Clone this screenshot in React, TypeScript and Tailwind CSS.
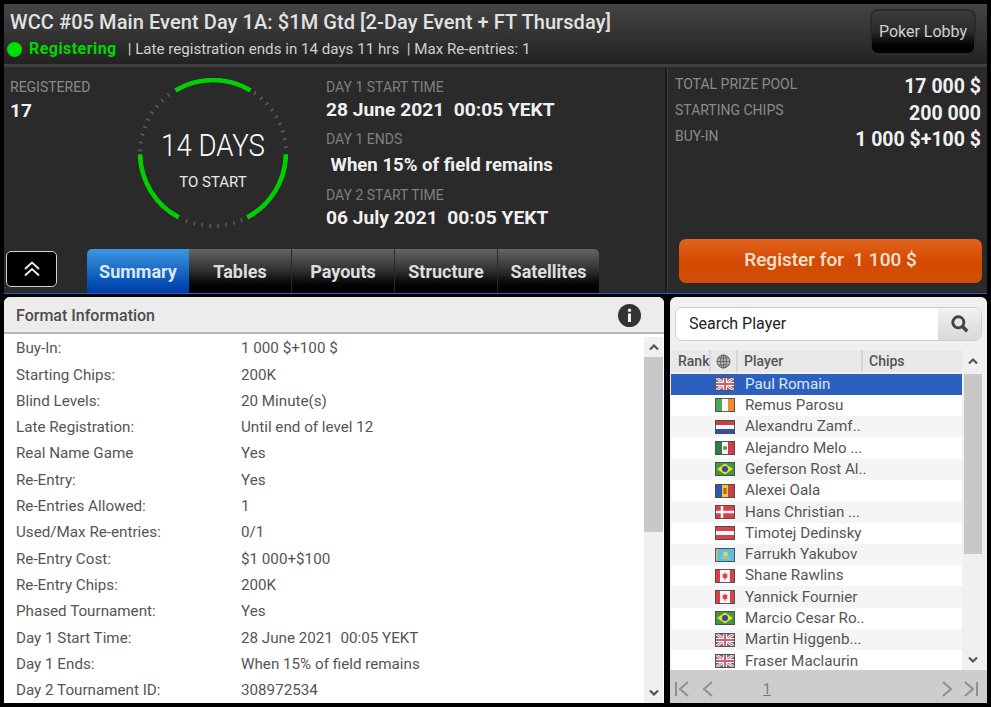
import React from "react";

const FONT = { fontFamily: "Roboto, 'Liberation Sans', sans-serif" };

function polar(r: number, deg: number) {
  const a = ((deg - 90) * Math.PI) / 180;
  return [73 + r * Math.cos(a), 73 + r * Math.sin(a)];
}
function arc(from: number, to: number) {
  const [x1, y1] = polar(71, from);
  const [x2, y2] = polar(71, to);
  return `M${x1} ${y1}A71 71 0 0 1 ${x2} ${y2}`;
}

function Ring() {
  const ticks: number[] = [];
  for (let d = 35; d < 90; d += 6.3) ticks.push(d);
  for (let d = 157; d < 205; d += 6.3) ticks.push(d);
  for (let d = 272; d < 328; d += 6.3) ticks.push(d);
  return (
    <svg width="150" height="150" viewBox="0 0 146 146" className="block">
      {ticks.map((d) => {
        const [a, b] = polar(73, d);
        const [c, e] = polar(69, d);
        return <line key={d} x1={a} y1={b} x2={c} y2={e} stroke="#5c5c5c" strokeWidth="1.5" />;
      })}
      <path d={arc(-31, 31)} stroke="#00d000" strokeWidth="4.5" fill="none" />
      <path d={arc(91, 152)} stroke="#00d000" strokeWidth="4.5" fill="none" />
      <path d={arc(208, 269)} stroke="#00d000" strokeWidth="4.5" fill="none" />
    </svg>
  );
}

type FlagKind = "uk" | "ie" | "nl" | "mx" | "br" | "md" | "dk" | "at" | "kz" | "ca";

function Flag({ kind }: { kind: FlagKind }) {
  let body: React.ReactNode = null;
  if (kind === "uk")
    body = (
      <>
        <rect width="20" height="14" fill="#6a6f9c" />
        <path d="M0 0L20 14M20 0L0 14" stroke="#ececec" strokeWidth="3" />
        <path d="M0 0L20 14M20 0L0 14" stroke="#d0707a" strokeWidth="1" />
        <path d="M10 0V14M0 7H20" stroke="#f4f4f4" strokeWidth="4" />
        <path d="M10 0V14M0 7H20" stroke="#d0606a" strokeWidth="2" />
      </>
    );
  if (kind === "ie")
    body = (
      <>
        <rect width="7" height="14" fill="#4ea65c" />
        <rect x="7" width="6" height="14" fill="#f7f7f7" />
        <rect x="13" width="7" height="14" fill="#f08a32" />
      </>
    );
  if (kind === "nl")
    body = (
      <>
        <rect width="20" height="5" fill="#c8404a" />
        <rect y="5" width="20" height="4" fill="#f7f7f7" />
        <rect y="9" width="20" height="5" fill="#33509c" />
      </>
    );
  if (kind === "mx")
    body = (
      <>
        <rect width="7" height="14" fill="#2f7d4b" />
        <rect x="7" width="6" height="14" fill="#f4f4f4" />
        <rect x="13" width="7" height="14" fill="#cc3f4a" />
        <circle cx="10" cy="7" r="2" fill="#8a7a50" />
      </>
    );
  if (kind === "br")
    body = (
      <>
        <rect width="20" height="14" fill="#3c9a3c" />
        <path d="M10 1.5L18 7L10 12.5L2 7Z" fill="#ecd83a" />
        <circle cx="10" cy="7" r="3" fill="#2d4f96" />
      </>
    );
  if (kind === "md")
    body = (
      <>
        <rect width="7" height="14" fill="#3355a5" />
        <rect x="7" width="6" height="14" fill="#f0c93a" />
        <rect x="13" width="7" height="14" fill="#cc3f4a" />
        <rect x="8.5" y="4" width="3" height="6" fill="#a5662f" />
      </>
    );
  if (kind === "dk")
    body = (
      <>
        <rect width="20" height="14" fill="#d8404a" />
        <path d="M7 0V14M0 7H20" stroke="#f6f6f6" strokeWidth="2.5" />
      </>
    );
  if (kind === "at")
    body = (
      <>
        <rect width="20" height="14" fill="#d8404a" />
        <rect y="5" width="20" height="4" fill="#f6f6f6" />
      </>
    );
  if (kind === "kz")
    body = (
      <>
        <rect width="20" height="14" fill="#5cbfe0" />
        <circle cx="10.5" cy="6" r="2.5" fill="#e8d24a" />
        <path d="M6.5 10H14.5" stroke="#e8d24a" strokeWidth="1" />
        <rect x="1" width="1.5" height="14" fill="#d8c84e" />
      </>
    );
  if (kind === "ca")
    body = (
      <>
        <rect width="20" height="14" fill="#f6f6f6" />
        <rect width="5" height="14" fill="#d8404a" />
        <rect x="15" width="5" height="14" fill="#d8404a" />
        <path d="M10 3L11 5.2L12.6 4.8L12 7.4L13 8L10.4 9.6V11H9.6V9.6L7 8L8 7.4L7.4 4.8L9 5.2Z" fill="#d8404a" />
      </>
    );
  return (
    <svg width="20" height="14" viewBox="0 0 20 14" className="block shrink-0">
      {body}
      <rect x="0.5" y="0.5" width="19" height="13" fill="none" stroke="#4a4a4a" strokeOpacity="0.9" />
    </svg>
  );
}

const INFO: [string, string][] = [
  ["Buy-In:", "1 000 $+100 $"],
  ["Starting Chips:", "200K"],
  ["Blind Levels:", "20 Minute(s)"],
  ["Late Registration:", "Until end of level 12"],
  ["Real Name Game", "Yes"],
  ["Re-Entry:", "Yes"],
  ["Re-Entries Allowed:", "1"],
  ["Used/Max Re-entries:", "0/1"],
  ["Re-Entry Cost:", "$1 000+$100"],
  ["Re-Entry Chips:", "200K"],
  ["Phased Tournament:", "Yes"],
  ["Day 1 Start Time:", "28 June 2021\u00a0\u00a000:05 YEKT"],
  ["Day 1 Ends:", "When 15% of field remains"],
  ["Day 2 Tournament ID:", "308972534"],
];

const PLAYERS: [FlagKind, string][] = [
  ["uk", "Paul Romain"],
  ["ie", "Remus Parosu"],
  ["nl", "Alexandru Zamf.."],
  ["mx", "Alejandro Melo ..."],
  ["br", "Geferson Rost Al.."],
  ["md", "Alexei Oala"],
  ["dk", "Hans Christian ..."],
  ["at", "Timotej Dedinsky"],
  ["kz", "Farrukh Yakubov"],
  ["ca", "Shane Rawlins"],
  ["ca", "Yannick Fournier"],
  ["br", "Marcio Cesar Ro.."],
  ["uk", "Martin Higgenb..."],
  ["uk", "Fraser Maclaurin"],
];

const TABS = ["Summary", "Tables", "Payouts", "Structure", "Satellites"];

function Chevron({ up }: { up?: boolean }) {
  return (
    <svg width="12" height="8" viewBox="0 0 12 8">
      <path d={up ? "M2 6.5L6 2.5L10 6.5" : "M2 1.5L6 5.5L10 1.5"} stroke="#555" strokeWidth="2.2" fill="none" />
    </svg>
  );
}

function Pager({ d }: { d: string }) {
  return (
    <svg width="16" height="18" viewBox="0 0 16 18">
      <path d={d} stroke="#8f8f8f" strokeWidth="2" fill="none" />
    </svg>
  );
}

export default function App() {
  return (
    <div style={FONT} className="w-[991px] h-[707px] bg-black pl-[4px] pt-[4px] pr-[4px] flex flex-col overflow-hidden">
      {/* title bar */}
      <div className="h-[60px] shrink-0 bg-gradient-to-b from-[#454545] to-[#222222] flex justify-between pr-[11px]">
        <div className="pl-[6px] pt-[6px]">
          <div className="text-[20px] leading-[24px] tracking-[0.08px] font-medium text-[#e2e2e2] whitespace-nowrap">
            WCC #05 Main Event Day 1A: $1M Gtd [2-Day Event + FT Thursday]
          </div>
          <div className="flex items-center mt-[5px] -ml-[3px] h-[20px]">
            <span className="w-[15px] h-[15px] rounded-full bg-[#00dd00]" />
            <span className="ml-[7px] text-[16px] tracking-[0.45px] font-bold text-[#00d800]">Registering</span>
            <span className="ml-[11px] text-[15.15px] text-[#cfcfcf] whitespace-pre">| Late registration ends in 14 days 11 hrs  | Max Re-entries: 1</span>
          </div>
        </div>
        <div className="mt-[5px] w-[106px] h-[46px] rounded-[8px] border-[2px] border-[#2a2a2a] bg-gradient-to-b from-[#3c3c3c] via-[#2a2a2a] to-black flex items-center justify-center text-[16px] text-[#cfcfcf]">
          Poker Lobby
        </div>
      </div>
      <div className="h-[3px] shrink-0 bg-[#3f3f3f]" />

      {/* stats */}
      <div className="h-[226px] shrink-0 bg-[#2a2a2a] flex">
        <div className="w-[663px] shrink-0 flex flex-col border-r-[2px] border-[#1c1c1c]">
          <div className="h-[182px] flex">
            <div className="w-[123px] pl-[6px] pt-[12px]">
              <div className="text-[14px] leading-[16px] text-[#8a8a8a]">REGISTERED</div>
              <div className="mt-[5px] text-[19px] leading-[22px] font-bold text-[#f0f0f0]">17</div>
            </div>
            <div className="w-[199px] relative">
              <div className="pt-[11px] pl-[11px]">
                <Ring />
              </div>
              <div className="absolute left-[11px] top-[61px] w-[150px] text-center">
                <div className="text-[31px] leading-[36px] font-light text-white whitespace-nowrap scale-x-[0.89]">14 DAYS</div>
                <div className="mt-[10px] text-[15px] leading-[16px] text-[#e8e8e8]">TO START</div>
              </div>
            </div>
            <div className="pt-[12px]">
              <div className="text-[14px] leading-[16px] text-[#7f7f7f]">DAY 1 START TIME</div>
              <div className="mt-[3px] text-[19.2px] leading-[24px] font-bold text-[#f0f0f0] whitespace-pre">28 June 2021  00:05 YEKT</div>
              <div className="mt-[9px] text-[14px] leading-[16px] text-[#7f7f7f]">DAY 1 ENDS</div>
              <div className="mt-[6px] text-[18.6px] leading-[24px] font-bold text-[#f0f0f0] whitespace-pre"> When 15% of field remains</div>
              <div className="mt-[10px] text-[14px] leading-[16px] text-[#7f7f7f]">DAY 2 START TIME</div>
              <div className="mt-[3px] text-[19.2px] leading-[24px] font-bold text-[#f0f0f0] whitespace-pre">06 July 2021  00:05 YEKT</div>
            </div>
          </div>
          <div className="h-[44px] flex items-end">
            <div className="w-[51px] h-[36px] ml-[2px] mb-[6px] rounded-[5px] border border-[#d0d0d0] bg-black flex items-center justify-center">
              <svg width="20" height="20" viewBox="0 0 20 20">
                <path d="M3 10L10 3.5L17 10M3 16.5L10 10L17 16.5" stroke="#e8e8e8" strokeWidth="2" fill="none" />
              </svg>
            </div>
            <div className="flex ml-[30px]">
              {TABS.map((t, i) => (
                <div
                  key={t}
                  className={
                    i === 0
                      ? "w-[102px] h-[44px] rounded-tl-[5px] bg-gradient-to-b from-[#3b97de] to-[#0039a8] flex items-center justify-center text-[18px] font-bold text-[#dbe8f5]"
                      : i === 4
                      ? "w-[101px] h-[44px] rounded-tr-[5px] bg-gradient-to-b from-[#666666] via-[#2f2f2f] to-black flex items-center justify-center text-[18px] font-bold text-[#dedede]"
                      : "w-[102px] h-[44px] mr-px bg-gradient-to-b from-[#666666] via-[#2f2f2f] to-black flex items-center justify-center text-[18px] font-bold text-[#dedede]"
                  }
                >
                  {t}
                </div>
              ))}
            </div>
          </div>
        </div>
        <div className="flex-1 border-l border-[#3c3c3c] flex flex-col pl-[7px] pr-[6px] pt-[7px]">
          <div className="h-[26px] flex justify-between items-start">
            <span className="text-[14px] leading-[20px] text-[#8a8a8a]">TOTAL PRIZE POOL</span>
            <span className="text-[19.5px] leading-[26px] font-bold text-[#f0f0f0]">17 000 $</span>
          </div>
          <div className="h-[26px] flex justify-between items-start">
            <span className="text-[14px] leading-[20px] text-[#8a8a8a]">STARTING CHIPS</span>
            <span className="pt-px text-[19.5px] leading-[26px] font-bold text-[#f0f0f0]">200 000</span>
          </div>
          <div className="h-[26px] flex justify-between items-start">
            <span className="text-[14px] leading-[20px] text-[#8a8a8a]">BUY-IN</span>
            <span className="pt-px text-[19.5px] leading-[26px] font-bold text-[#f0f0f0]">1 000 $+100 $</span>
          </div>
          <div className="mt-[87px] ml-[4px] -mr-px h-[44px] rounded-[7px] bg-gradient-to-b from-[#e2641c] via-[#d44a00] to-[#cf4f08] flex items-center justify-center pb-[2px] text-[19px] font-medium text-[#f6e3d6] whitespace-pre">
            Register for  1 100 $
          </div>
        </div>
      </div>
      <div className="h-px shrink-0 bg-[#1f66c0]" />

      {/* panels */}
      <div className="flex-1 min-h-0 flex pt-[3px] pb-[4px]">
        {/* format info */}
        <div className="w-[660px] shrink-0 bg-white rounded-t-[6px] flex flex-col overflow-hidden">
          <div className="h-[37px] shrink-0 bg-[#ececec] border-b-[2px] border-[#b5b5b5] flex items-center justify-between pl-[12px] pr-[23px] pt-[2px]">
            <span className="text-[16px] font-medium text-[#4c4c4c]">Format Information</span>
            <svg width="23" height="23" viewBox="0 0 23 23">
              <circle cx="11.5" cy="11.5" r="11.5" fill="#333" />
              <circle cx="11.5" cy="6.2" r="1.7" fill="#eee" />
              <rect x="10" y="9.5" width="3" height="8.5" fill="#eee" />
            </svg>
          </div>
          <div className="flex-1 min-h-0 flex">
            <div className="flex-1 pt-[1.5px] overflow-hidden">
              {INFO.map(([k, v]) => (
                <div key={k} className="h-[26.3px] flex items-center text-[15.2px] text-[#555] whitespace-nowrap">
                  <span className="w-[237px] pl-[12px] shrink-0">{k}</span>
                  <span>{v}</span>
                </div>
              ))}
            </div>
            <div className="w-[19px] shrink-0 mr-px flex flex-col mt-[3px] bg-[#f0f0f0]">
              <div className="h-[20px] flex items-center justify-center"><Chevron up /></div>
              <div className="h-[175px] bg-[#c8c8c8]" />
              <div className="flex-1" />
              <div className="h-[20px] flex items-center justify-center"><Chevron /></div>
            </div>
          </div>
        </div>

        {/* players */}
        <div className="ml-[6px] w-[317px] shrink-0 bg-[#f0f0f0] rounded-t-[6px] flex flex-col overflow-hidden">
          <div className="mx-[5px] mt-[10px] h-[34px] shrink-0 rounded-[7px] border border-[#cfcfcf] bg-white flex overflow-hidden">
            <div className="flex-1 pl-[13px] flex items-center text-[16px] text-[#222]">Search Player</div>
            <div className="w-[43px] bg-gradient-to-b from-[#f2f2f2] to-[#d8d8d8] flex items-center justify-center">
              <svg width="20" height="20" viewBox="0 0 18 18">
                <circle cx="7.5" cy="7.5" r="5" stroke="#444" strokeWidth="2.6" fill="none" />
                <path d="M11 11L15.5 15.5" stroke="#444" strokeWidth="3.2" />
              </svg>
            </div>
          </div>
          <div className="mt-[9px] h-[22px] shrink-0 flex text-[14px] font-medium text-[#555]">
            <div className="w-[291px] flex bg-[#e8e8e8] ml-px">
              <div className="w-[40px] pl-[7px] border-r-[2px] border-[#d6d6d6] leading-[22px] whitespace-nowrap">Rank</div>
              <div className="w-[27px] border-r-[2px] border-[#d6d6d6] flex items-center justify-center">
                <svg width="15" height="15" viewBox="0 0 15 15" fill="none" stroke="#666" strokeWidth="1">
                  <circle cx="7.5" cy="7.5" r="6.5" fill="#bbb" />
                  <ellipse cx="7.5" cy="7.5" rx="3" ry="6.5" />
                  <path d="M1 7.5H14M2 4H13M2 11H13M7.5 1V14" />
                </svg>
              </div>
              <div className="w-[125px] pl-[6px] border-r-[2px] border-[#d6d6d6] leading-[22px]">Player</div>
              <div className="pl-[6px] leading-[22px]">Chips</div>
            </div>
            <div className="ml-[2px] w-[18px] flex items-center justify-center"><Chevron up /></div>
          </div>
          <div className="flex-1 min-h-0 flex mt-[1.5px]">
            <div className="w-[291px] ml-px bg-white overflow-hidden">
              {PLAYERS.map(([f, n], i) => (
                <div
                  key={n}
                  className={
                    i === 0
                      ? "h-[21.3px] flex items-center pl-[44px] bg-[#2b60bf] text-[#dfe8f8] text-[15.2px]"
                      : i % 2 === 1
                      ? "h-[21.3px] flex items-center pl-[44px] bg-white text-[#555] text-[15.2px]"
                      : "h-[21.3px] flex items-center pl-[44px] bg-[#f5f5f5] text-[#555] text-[15.2px]"
                  }
                >
                  <Flag kind={f} />
                  <span className="ml-[10px] whitespace-nowrap">{n}</span>
                </div>
              ))}
            </div>
            <div className="ml-[2px] w-[18px] flex flex-col">
              <div className="h-[180px] bg-[#c8c8c8]" />
              <div className="flex-1" />
              <div className="h-[20px] flex items-center justify-center"><Chevron /></div>
            </div>
          </div>
          <div className="h-[33px] shrink-0 bg-[#cdcdcd] flex items-center pl-[4px] pr-[8px] pt-[4px] text-[#777]">
            <Pager d="M2 2V16M14 2L6 9L14 16" />
            <div className="ml-[10px]"><Pager d="M12 2L4 9L12 16" /></div>
            <span className="ml-[47px] text-[14px] underline mt-[2px]">1</span>
            <div className="flex-1" />
            <Pager d="M4 2L12 9L4 16" />
            <div className="ml-[8px]"><Pager d="M2 2L10 9L2 16M14 2V16" /></div>
          </div>
        </div>
      </div>
    </div>
  );
}
